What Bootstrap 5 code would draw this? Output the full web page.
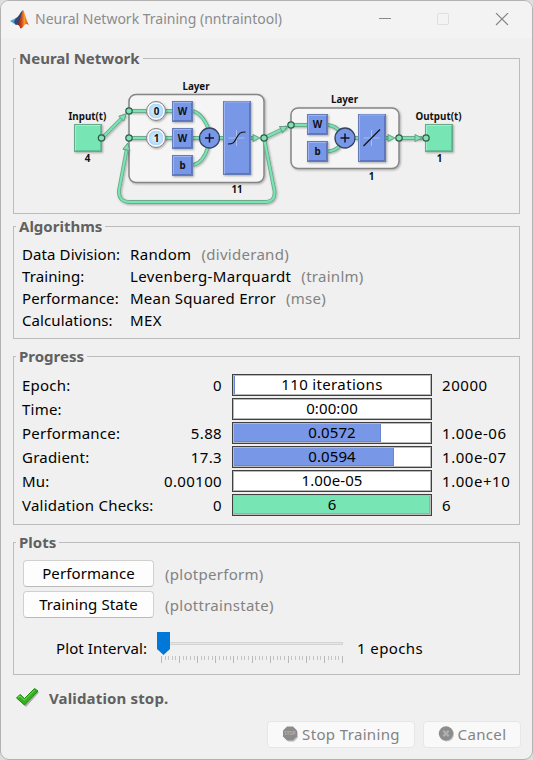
<!DOCTYPE html>
<html lang="en">
<head>
<meta charset="utf-8">
<title>Neural Network Training (nntraintool)</title>
<link href="https://cdn.jsdelivr.net/npm/bootstrap@5.3.0/dist/css/bootstrap.min.css" rel="stylesheet">
<style>
body{margin:0;background:#dedede;font-family:"Noto Sans","Open Sans",sans-serif;font-size:15px;line-height:22px;color:#000;overflow:hidden;letter-spacing:.2px}
.win{width:533px;height:760px;background:#f0f0f0;border:1px solid #b2b2b2;border-radius:9px;overflow:hidden}
.titlebar{height:37px;background:#f3f3f3;color:#8c8c8c;padding:0 22px 0 8px}
.titlebar .cap{font-size:14px;margin-left:4px;white-space:nowrap;letter-spacing:0;padding-bottom:1px}
.group{border:1px solid #bcbcbc;margin:0 12px;width:507px}
.gtitle{display:block;width:max-content;margin-top:-12px;margin-left:2px;padding:0 3px;background:#f0f0f0;color:#606060;font-weight:700;font-size:15px;line-height:22px;letter-spacing:0}
.g-net{height:156px;margin-top:20px}
.g-alg{height:113px;margin-top:12px}
.g-pro{height:169px;margin-top:17px}
.g-plt{height:133px;margin-top:17px}
.net{display:block;margin-top:-10px;letter-spacing:0}
.fn{color:#828282;letter-spacing:.28px}
.algs{padding:6px 0 0 8px}
.algs .k{width:108px;letter-spacing:.1px}
.algs .val{letter-spacing:.36px}
.algs .mid{letter-spacing:.22px}
.algs .fn{margin-left:10px}
.rows{padding-top:6px}
.prow{height:24px;padding-left:8px;line-height:24px;white-space:nowrap}
.prow .k{width:140px;letter-spacing:.22px}
.prow .v{width:60px;text-align:right;margin-right:10px;letter-spacing:.35px}
.meter{width:200px;height:22px;margin-top:1px;border:1px solid #404040;background:#fff;display:grid;box-shadow:inset 0 0 0 1px #b9b9b9;padding:1px}
.meter>*{grid-area:1/1}
.meter .fill{background:#7897e6;border-right:1px solid #6a86cf;border-bottom:1px solid #6a86cf}
.meter .fill.ok{background:#78e6b4;border-color:#67cd9f}
.meter .t{text-align:center;line-height:17px;font-size:15px;letter-spacing:.1px}
.meter .wide{letter-spacing:.35px}
.prow .m{margin-left:10px;letter-spacing:.55px}
.pbtn{width:131px;height:27px;padding:0;font-size:15px;line-height:25px;background:#fdfdfd;border:1px solid #d0d0d0;border-bottom-color:#bababa;border-radius:4px;color:#000;letter-spacing:.1px}
.pbtn:disabled{opacity:1;background:#f9f9f9;border-color:#e6e6e6;color:#838383}
.plots{padding:7px 0 0 9px;display:grid;row-gap:4px}
.plots .fn{margin-left:11px}
.interval{margin-top:12px}
.interval .lbl{width:142px;padding-left:42px;line-height:36px;white-space:nowrap;letter-spacing:.1px}
.interval .ep{margin-left:11px;line-height:36px;letter-spacing:.4px}
.status{height:24px;margin:11px 0 0 14px;color:#606060;font-weight:700;line-height:24px;letter-spacing:.15px}
.status .done{margin-left:8px}
.actions{margin:11px 11px 0 0;gap:8px}
.b-stop{width:148px}
.b-cancel{width:98px}
.actions .pbtn{gap:3px;letter-spacing:.35px}
</style>
<script src="https://cdn.jsdelivr.net/npm/bootstrap@5.3.0/dist/js/bootstrap.bundle.min.js"></script>
</head>
<body>
<div class="win">
  <header class="titlebar d-flex align-items-center">
    <svg width="22" height="22" viewBox="0 0 22 22">
      <defs><linearGradient id="lg" x1="0" x2="1"><stop offset="0" stop-color="#4a1c1c"/><stop offset=".4" stop-color="#c8401c"/><stop offset=".65" stop-color="#f79a2c"/><stop offset="1" stop-color="#c22a16"/></linearGradient></defs>
      <path d="M1 12l6-3 4 3-4 4z" fill="#48a3d8"/><path d="M7 9c3-1 4-6 7-8l-3 12-4 3-2-3z" fill="#34456f"/>
      <path d="M14 1c2 2 3 11 6 15-3-2-4-1-6 2-1 1-2 2-3 1 0-2-2-4-4-3 4-2 5-11 7-15z" fill="url(#lg)"/>
    </svg>
    <span class="cap">Neural Network Training (nntraintool)</span>
    <svg class="ms-auto" width="131" height="14" viewBox="0 0 131 14" fill="none">
      <path d="M0 5.500h12" stroke="#8a8a8a"/><rect x="58.500" y=".5" width="11" height="11" rx="1" stroke="#dedede"/><path d="M117 0l12 12M129 0l-12 12" stroke="#858585" stroke-width="1.100"/>
    </svg>
  </header>

  <section class="group g-net">
    <span class="gtitle">Neural Network</span>
    <svg class="net" width="505" height="154" viewBox="14 59 505 154" font-family="Noto Sans, Open Sans, sans-serif" font-weight="700" font-size="9.800" text-anchor="middle">
      <defs>
        <filter id="sh" x="-20%" y="-20%" width="140%" height="150%"><feDropShadow dx="1" dy="1" stdDeviation=".8" flood-opacity=".3"/></filter>
        <radialGradient id="dl"><stop offset="0" stop-color="#e4f4ff"/><stop offset=".76" stop-color="#acd8fa"/><stop offset=".8" stop-color="#fff"/><stop offset="1" stop-color="#e0e0e0"/></radialGradient>
        <g id="blk"><rect width="20" height="20" fill="#7897e6" stroke="#657bb5"/><path d="M1 19V1h18" fill="none" stroke="#9bb3f2"/><path d="M1 19h18V1" fill="none" stroke="#5c75bd"/></g>
        <g id="port"><circle r="3.200" fill="#83dfb4" stroke="#2c5e47" stroke-width="1.200"/></g>
        <g id="sum"><circle r="10" fill="#7897e6" stroke="#364262" stroke-width="1.300"/><path d="M-4.500 0h9M0-4.500v9" stroke="#101525" stroke-width="1.500"/></g>
        <g id="io"><rect width="27" height="27" fill="#78e6b4" stroke="#6aa88b"/><path d="M1 26V1h25" fill="none" stroke="#9bf0cb"/><path d="M1 26h25V1" fill="none" stroke="#5fc296"/></g>
        <path id="tip" d="M-6-3.500L1 0l-7 3.500z" fill="#83dfb4" stroke="#5f9b80" stroke-width=".9"/>
        <path id="wire" d="M102 138l23-23M129 111h43M129 138h94M193 111q10 3 16 19M193 165q10-2 15-18M251 138h5M264 138l23-11M264 138l10.500 53q1 11-10 11H130q-12 0-11-12l8-42M291 125h16M328 125q8 1 12 7M328 151.500q8-1 12-6M355 138h3M386 138h5M399 138h23"/>
      </defs>
      <g fill="#f5f5f5" stroke="#858585" stroke-width="1.500" filter="url(#sh)">
        <rect x="129" y="94.500" width="135" height="88" rx="7"/><rect x="291" y="108" width="108" height="60.500" rx="7"/>
      </g>
      <g fill="none" stroke-linejoin="round" filter="url(#sh)">
        <use href="#wire" stroke="#6ca98d" stroke-width="3.800"/>
        <use href="#wire" stroke="#78e6b4" stroke-width="2"/>
      </g>
      <use href="#tip" transform="translate(125.500 114.500) rotate(-45)"/><use href="#tip" transform="translate(127.500 144) rotate(-79)"/>
      <use href="#tip" x="259" y="138"/><use href="#tip" transform="translate(286.500 127) rotate(-25)"/><use href="#tip" x="394" y="138"/><use href="#tip" x="421" y="138"/>
      <g filter="url(#sh)">
        <use href="#io" x="74.500" y="124.500"/><use href="#io" x="425.500" y="124.500"/>
        <use href="#blk" x="172.500" y="101.500"/><use href="#blk" x="172.500" y="128.500"/><use href="#blk" x="172.500" y="155.500"/>
        <use href="#blk" x="307.500" y="114.500"/><use href="#blk" x="307.500" y="141.500"/>
        <g fill="#7897e6" stroke="#657bb5"><rect x="223.500" y="101.500" width="27" height="73"/><rect x="358.500" y="114.500" width="27" height="47"/></g>
        <g fill="url(#dl)" stroke="#858585"><circle cx="156" cy="111" r="9.500"/><circle cx="156" cy="138" r="9.500"/></g>
      </g>
      <g fill="none" stroke="#9bb3f2"><path d="M224.500 174v-72h25M359.500 161v-46h25"/><path d="M236.500 130v16M228.500 138h16M371.500 130v16M363.500 138h16" stroke="#a9bdf3"/></g>
      <path d="M225 173.500h24.500V103M360 160.500h24.500V116" fill="none" stroke="#5c75bd"/>
      <path d="M228 144c5 0 6-1 8.500-6s4-6 9-6M363.500 146l16.500-16.500" fill="none" stroke="#111" stroke-width="1.200"/>
      <use href="#sum" x="209.500" y="138"/><use href="#sum" x="345" y="138"/>
      <use href="#port" x="101.500" y="138"/><use href="#port" x="129" y="111"/><use href="#port" x="129" y="138"/><use href="#port" x="264" y="138"/><use href="#port" x="291" y="125"/><use href="#port" x="399" y="138"/><use href="#port" x="426" y="138"/>
      <g fill="#111">
        <text x="87.500" y="120">Input(t)</text><text x="87.500" y="162">4</text><text x="196" y="90">Layer</text><text x="237" y="193">11</text>
        <text x="344.500" y="103">Layer</text><text x="371.500" y="180">1</text><text x="438.500" y="120">Output(t)</text><text x="439.500" y="162">1</text>
        <text x="156.500" y="115">0</text><text x="156.500" y="142">1</text>
        <text x="182.500" y="115">W</text><text x="182.500" y="142">W</text><text x="182.500" y="169">b</text><text x="317.500" y="128">W</text><text x="317.500" y="155">b</text>
      </g>
    </svg>
  </section>

  <section class="group g-alg">
    <span class="gtitle">Algorithms</span>
    <div class="algs">
      <div class="d-flex"><span class="k">Data Division:</span><span class="val">Random</span><span class="fn">(dividerand)</span></div>
      <div class="d-flex"><span class="k">Training:</span><span class="val">Levenberg-Marquardt</span><span class="fn">(trainlm)</span></div>
      <div class="d-flex"><span class="k">Performance:</span><span class="val mid">Mean Squared Error</span><span class="fn">(mse)</span></div>
      <div class="d-flex"><span class="k">Calculations:</span><span class="val">MEX</span></div>
    </div>
  </section>

  <section class="group g-pro">
    <span class="gtitle">Progress</span>
    <div class="rows">
      <div class="prow d-flex"><span class="k">Epoch:</span><span class="v">0</span><div class="meter"><div class="fill" style="width:1px"></div><div class="t wide">110 iterations</div></div><span class="m">20000</span></div>
      <div class="prow d-flex"><span class="k">Time:</span><span class="v"></span><div class="meter"><div class="t">0:00:00</div></div></div>
      <div class="prow d-flex"><span class="k">Performance:</span><span class="v">5.88</span><div class="meter"><div class="fill" style="width:75%"></div><div class="t">0.0572</div></div><span class="m">1.00e-06</span></div>
      <div class="prow d-flex"><span class="k">Gradient:</span><span class="v">17.3</span><div class="meter"><div class="fill" style="width:81.500%"></div><div class="t">0.0594</div></div><span class="m">1.00e-07</span></div>
      <div class="prow d-flex"><span class="k">Mu:</span><span class="v">0.00100</span><div class="meter"><div class="t">1.00e-05</div></div><span class="m">1.00e+10</span></div>
      <div class="prow d-flex"><span class="k">Validation Checks:</span><span class="v">0</span><div class="meter"><div class="fill ok" style="width:100%"></div><div class="t">6</div></div><span class="m">6</span></div>
    </div>
  </section>

  <section class="group g-plt">
    <span class="gtitle">Plots</span>
    <div class="plots">
      <div class="d-flex align-items-center"><button class="btn pbtn">Performance</button><span class="fn">(plotperform)</span></div>
      <div class="d-flex align-items-center"><button class="btn pbtn">Training State</button><span class="fn">(plottrainstate)</span></div>
    </div>
    <div class="interval d-flex">
      <span class="lbl">Plot Interval:</span>
      <svg width="190" height="35" viewBox="156 630 190 35" fill="none">
        <rect x="162.500" y="642.500" width="180" height="2" fill="#e7e7e7" stroke="#d4d4d4"/>
        <path id="minor" stroke="#c4c4c4"/><path id="major" stroke="#b8b8b8"/>
        <path d="M157 632h13v17l-6.500 6-6.500-6z" fill="#0078d7"/>
      </svg>
      <span class="ep">1 epochs</span>
    </div>
  </section>

  <div class="status d-flex align-items-center">
    <svg width="26" height="22" viewBox="0 0 26 22"><path d="M2.500 11l3-3.500 4 4.500L19.500 2.500l3 2L10 18.500z" fill="#777" opacity=".55" transform="translate(1 1)" stroke="#777" stroke-linejoin="round"/><path d="M1.500 11l3.500-3.500 4.500 4L19.500 1.500l3.500 2.500L9.500 18z" fill="#32b31c" stroke="#208a12" stroke-linejoin="round"/><path d="M3 10.500l2-1.500 4.500 4L19.500 3" stroke="#76d85c" fill="none"/></svg>
    <span class="done">Validation stop.</span>
  </div>
  <div class="actions d-flex justify-content-end">
    <button class="btn pbtn b-stop d-flex align-items-center justify-content-center" disabled>
      <svg width="17" height="17" viewBox="0 0 17 17"><path d="M6.500 2.200h5.500l4 4v5.500l-4 4H6.500l-4-4V6.200z" fill="#c8c8c8"/><path d="M5 .5h6L15 4.500v6L11 14.500H5L1 10.500v-6z" fill="#8c8c8c"/><text x="8" y="9.200" font-size="4.500" font-weight="700" fill="#b0b0b0" text-anchor="middle" letter-spacing="0">STOP</text></svg>
      <span>Stop Training</span></button>
    <button class="btn pbtn b-cancel d-flex align-items-center justify-content-center" disabled>
      <svg width="17" height="17" viewBox="0 0 17 17"><circle cx="8.800" cy="8.300" r="7.200" fill="#c8c8c8"/><circle cx="8" cy="7.500" r="7.200" fill="#8c8c8c"/><path d="M5.300 4.800l5.400 5.400M10.700 4.800l-5.400 5.400" stroke="#b0b0b0" stroke-width="2.200"/></svg>
      <span>Cancel</span></button>
  </div>
</div>
<script>
  // Slider scale: 50 steps, a longer tick at every fifth one
  let minor = '', major = '';
  for (let i = 0; i <= 50; i++) {
    const x = Math.round(161 + i * 3.62) + 0.5;
    if (i % 5) minor += `M${x} 656v4`; else major += `M${x} 656v7`;
  }
  document.getElementById('minor').setAttribute('d', minor);
  document.getElementById('major').setAttribute('d', major);
</script>
</body>
</html>
